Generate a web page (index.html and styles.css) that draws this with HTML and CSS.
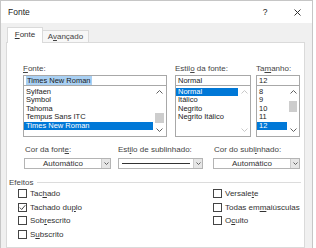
FILE: index.html
```html
<!DOCTYPE html>
<html lang="pt">

<head>
    <meta charset="UTF-8">
    <meta name="viewport" content="width=device-width, initial-scale=1.0">
    <title>Fonte</title>
    <link rel="stylesheet" href="styles.css">
</head>

<body>
    <div class="dialog">
        <div class="titlebar">
            <span class="title">Fonte</span>
            <span class="help">?</span>
            <span class="close">
                <svg width="7" height="7" viewBox="0 0 7 7">
                    <path d="M0.5 0.5 L6.5 6.5 M6.5 0.5 L0.5 6.5" stroke="#333" stroke-width="1" fill="none" />
                </svg>
            </span>
        </div>

        <div class="tabs">
            <div class="tab active"><u>F</u>onte</div>
            <div class="tab">A<u>v</u>ançado</div>
        </div>

        <div class="panel">
            <div class="font-row">
                <div class="field f-name">
                    <div class="label"><u>F</u>onte:</div>
                    <div class="textbox"><span class="sel">Times New Roman</span></div>
                    <div class="listbox">
                        <ul>
                            <li>Sylfaen</li>
                            <li>Symbol</li>
                            <li>Tahoma</li>
                            <li>Tempus Sans ITC</li>
                            <li class="on">Times New Roman</li>
                        </ul>
                        <div class="scrollbar">
                            <div class="sb-btn"><svg width="7" height="4" viewBox="0 0 7 4"><path d="M0.5 3.5 L3.5 0.5 L6.5 3.5" stroke="#606060" fill="none" /></svg></div>
                            <div class="sb-track"><div class="thumb thumb-low"></div></div>
                            <div class="sb-btn"><svg width="7" height="4" viewBox="0 0 7 4"><path d="M0.5 0.5 L3.5 3.5 L6.5 0.5" stroke="#606060" fill="none" /></svg></div>
                        </div>
                    </div>
                </div>

                <div class="field f-style">
                    <div class="label">Estil<u>o</u> da fonte:</div>
                    <div class="textbox">Normal</div>
                    <div class="listbox">
                        <ul>
                            <li class="on">Normal</li>
                            <li>Itálico</li>
                            <li>Negrito</li>
                            <li>Negrito Itálico</li>
                        </ul>
                        <div class="scrollbar off">
                            <div class="sb-btn"><svg width="7" height="4" viewBox="0 0 7 4"><path d="M0.5 3.5 L3.5 0.5 L6.5 3.5" stroke="#c8c8c8" fill="none" /></svg></div>
                            <div class="sb-track"></div>
                            <div class="sb-btn"><svg width="7" height="4" viewBox="0 0 7 4"><path d="M0.5 0.5 L3.5 3.5 L6.5 0.5" stroke="#c8c8c8" fill="none" /></svg></div>
                        </div>
                    </div>
                </div>

                <div class="field f-size">
                    <div class="label">Ta<u>m</u>anho:</div>
                    <div class="textbox">12</div>
                    <div class="listbox">
                        <ul>
                            <li>8</li>
                            <li>9</li>
                            <li>10</li>
                            <li>11</li>
                            <li class="on">12</li>
                        </ul>
                        <div class="scrollbar">
                            <div class="sb-btn"><svg width="7" height="4" viewBox="0 0 7 4"><path d="M0.5 3.5 L3.5 0.5 L6.5 3.5" stroke="#606060" fill="none" /></svg></div>
                            <div class="sb-track"><div class="thumb thumb-high"></div></div>
                            <div class="sb-btn"><svg width="7" height="4" viewBox="0 0 7 4"><path d="M0.5 0.5 L3.5 3.5 L6.5 0.5" stroke="#606060" fill="none" /></svg></div>
                        </div>
                    </div>
                </div>
            </div>

            <div class="combo-row">
                <div class="field c-color">
                    <div class="label">Cor da font<u>e</u>:</div>
                    <div class="combo">
                        <div class="combo-text">Automático</div>
                        <div class="combo-btn"><svg width="5" height="3" viewBox="0 0 5 3"><path d="M0.5 0.5 L2.5 2.5 L4.5 0.5" stroke="#606060" fill="none" /></svg></div>
                    </div>
                </div>
                <div class="field c-line">
                    <div class="label">Est<u>i</u>lo de sublinhado:</div>
                    <div class="combo">
                        <div class="combo-text"><div class="line-sample"></div></div>
                        <div class="combo-btn"><svg width="5" height="3" viewBox="0 0 5 3"><path d="M0.5 0.5 L2.5 2.5 L4.5 0.5" stroke="#606060" fill="none" /></svg></div>
                    </div>
                </div>
                <div class="field c-under">
                    <div class="label">Cor do subl<u>i</u>nhado:</div>
                    <div class="combo">
                        <div class="combo-text">Automático</div>
                        <div class="combo-btn"><svg width="5" height="3" viewBox="0 0 5 3"><path d="M0.5 0.5 L2.5 2.5 L4.5 0.5" stroke="#606060" fill="none" /></svg></div>
                    </div>
                </div>
            </div>

            <div class="group">
                <div class="group-head">
                    <span>Efeitos</span>
                    <div class="rule"></div>
                </div>
                <div class="checks">
                    <div class="col">
                        <div class="check"><span class="box"></span>Tac<u>h</u>ado</div>
                        <div class="check"><span class="box"><svg width="7" height="7" viewBox="0 0 7 7"><path d="M0.8 3.6 L2.7 5.5 L6.3 1.2" stroke="#333" stroke-width="0.9" fill="none" /></svg></span>Tachado du<u>p</u>lo</div>
                        <div class="check"><span class="box"></span>Sob<u>r</u>escrito</div>
                        <div class="check"><span class="box"></span>S<u>u</u>bscrito</div>
                    </div>
                    <div class="col">
                        <div class="check"><span class="box"></span>Versale<u>t</u>e</div>
                        <div class="check"><span class="box"></span>Todas em <u>m</u>aiúsculas</div>
                        <div class="check"><span class="box"></span>O<u>c</u>ulto</div>
                    </div>
                </div>
            </div>
        </div>
    </div>
</body>

</html>
```

FILE: styles.css
```css
* {
    padding: 0;
    margin: 0;
    box-sizing: border-box;
}

body {
    background: #fff;
    font-family: 'Liberation Sans', Arial, sans-serif;
    font-size: 8px;
    color: #333;
}

u {
    text-decoration-thickness: 1px;
    text-underline-offset: 1px;
}

.dialog {
    width: 313px;
    height: 248px;
    border: 1px solid #c6c6c6;
    border-bottom: none;
    background: #f0f0f0;
    display: flex;
    flex-direction: column;
    overflow: hidden;
}

/* title bar */
.titlebar {
    height: 22px;
    background: #fff;
    display: flex;
    align-items: center;
    padding-left: 7px;
    padding-right: 10px;
    font-size: 8.5px;
    color: #222;
}

.title {
    flex: 1;
}

.help {
    width: 10px;
    text-align: center;
    margin-right: 22px;
}

.close {
    width: 10px;
    display: flex;
    justify-content: center;
}

/* tabs */
.tabs {
    height: 19px;
    display: flex;
    align-items: flex-end;
    padding-left: 6px;
}

.tab {
    height: 12px;
    width: 46px;
    line-height: 11px;
    text-align: center;
    background: #f7f7f7;
    border: 1px solid #dadada;
    border-left: none;
    border-bottom: none;
    color: #444;
}

.tab.active {
    height: 16px;
    width: 36px;
    line-height: 14px;
    background: #fff;
    border-left: 1px solid #dadada;
    margin-bottom: -1px;
    position: relative;
    z-index: 1;
    color: #333;
}

/* panel */
.panel {
    flex: 1;
    margin: 0 7px 0 5px;
    background: #fff;
    border: 1px solid #dadada;
    padding: 21px 3px 0 2px;
}

.label {
    height: 10px;
    line-height: 10px;
    color: #444;
    white-space: nowrap;
}

.font-row {
    display: flex;
    margin-left: 14px;
}

.f-name {
    width: 144px;
    margin-right: 8px;
}

.f-style {
    width: 76px;
    margin-right: 5px;
}

.f-size {
    width: 44px;
}

.textbox {
    margin-top: 1px;
    height: 11px;
    border: 1px solid #a8a8a8;
    line-height: 9px;
    padding-left: 2px;
    font-size: 7.5px;
    color: #222;
}

.sel {
    background: #a9d0f3;
    color: #1a1a1a;
    padding: 0 1px;
}

.listbox {
    margin-top: -1px;
    height: 52px;
    border: 1px solid #a8a8a8;
    display: flex;
}

.listbox ul {
    flex: 1;
    list-style: none;
    padding-top: 1.5px;
    color: #222;
    font-size: 7.5px;
}

.listbox li {
    height: 8.5px;
    line-height: 8.5px;
    padding-left: 2px;
    white-space: nowrap;
}

.listbox li.on {
    background: #0078d7;
    color: #fff;
}

.scrollbar {
    width: 12px;
    display: flex;
    flex-direction: column;
    background: #fff;
}

.f-name .scrollbar {
    width: 13px;
}

.sb-btn {
    height: 12px;
    display: flex;
    align-items: center;
    justify-content: center;
}

.sb-track {
    flex: 1;
    padding: 0 2px;
}

.thumb {
    background: #cdcdcd;
    height: 10px;
}

.thumb-low {
    margin-top: 15px;
}

.thumb-high {
    margin-top: 3px;
    height: 11px;
}

/* combos */
.combo-row {
    display: flex;
    margin-top: 8px;
    margin-left: 15px;
}

.c-color {
    width: 87px;
    margin-right: 7px;
}

.c-line {
    width: 85px;
    margin-right: 10px;
}

.c-under {
    width: 87px;
}

.c-color .label,
.c-under .label {
    padding-left: 1px;
}

.combo {
    margin-top: 3px;
    height: 11px;
    border: 1px solid #b4b4b4;
    display: flex;
    background: #fff;
}

.combo-text {
    flex: 1;
    text-align: center;
    line-height: 9px;
    color: #333;
    display: flex;
    align-items: center;
    justify-content: center;
}

.line-sample {
    width: 68px;
    height: 1px;
    background: #333;
}

.combo-btn {
    width: 9px;
    background: #e6e6e6;
    border-left: 1px solid #cccccc;
    display: flex;
    align-items: center;
    justify-content: center;
}

/* effects */
.group {
    margin-top: 8px;
}

.group-head {
    height: 10px;
    display: flex;
    align-items: center;
    color: #444;
}

.rule {
    flex: 1;
    height: 1px;
    background: #dcdcdc;
    margin-left: 4px;
}

.checks {
    display: grid;
    grid-template-columns: 195px 1fr;
    padding-left: 9px;
}

.check {
    height: 13.5px;
    display: flex;
    align-items: center;
    white-space: nowrap;
    color: #333;
}

.box {
    width: 9px;
    height: 9px;
    border: 1px solid #444;
    background: #fff;
    margin-right: 3px;
    display: flex;
    align-items: center;
    justify-content: center;
}
```
